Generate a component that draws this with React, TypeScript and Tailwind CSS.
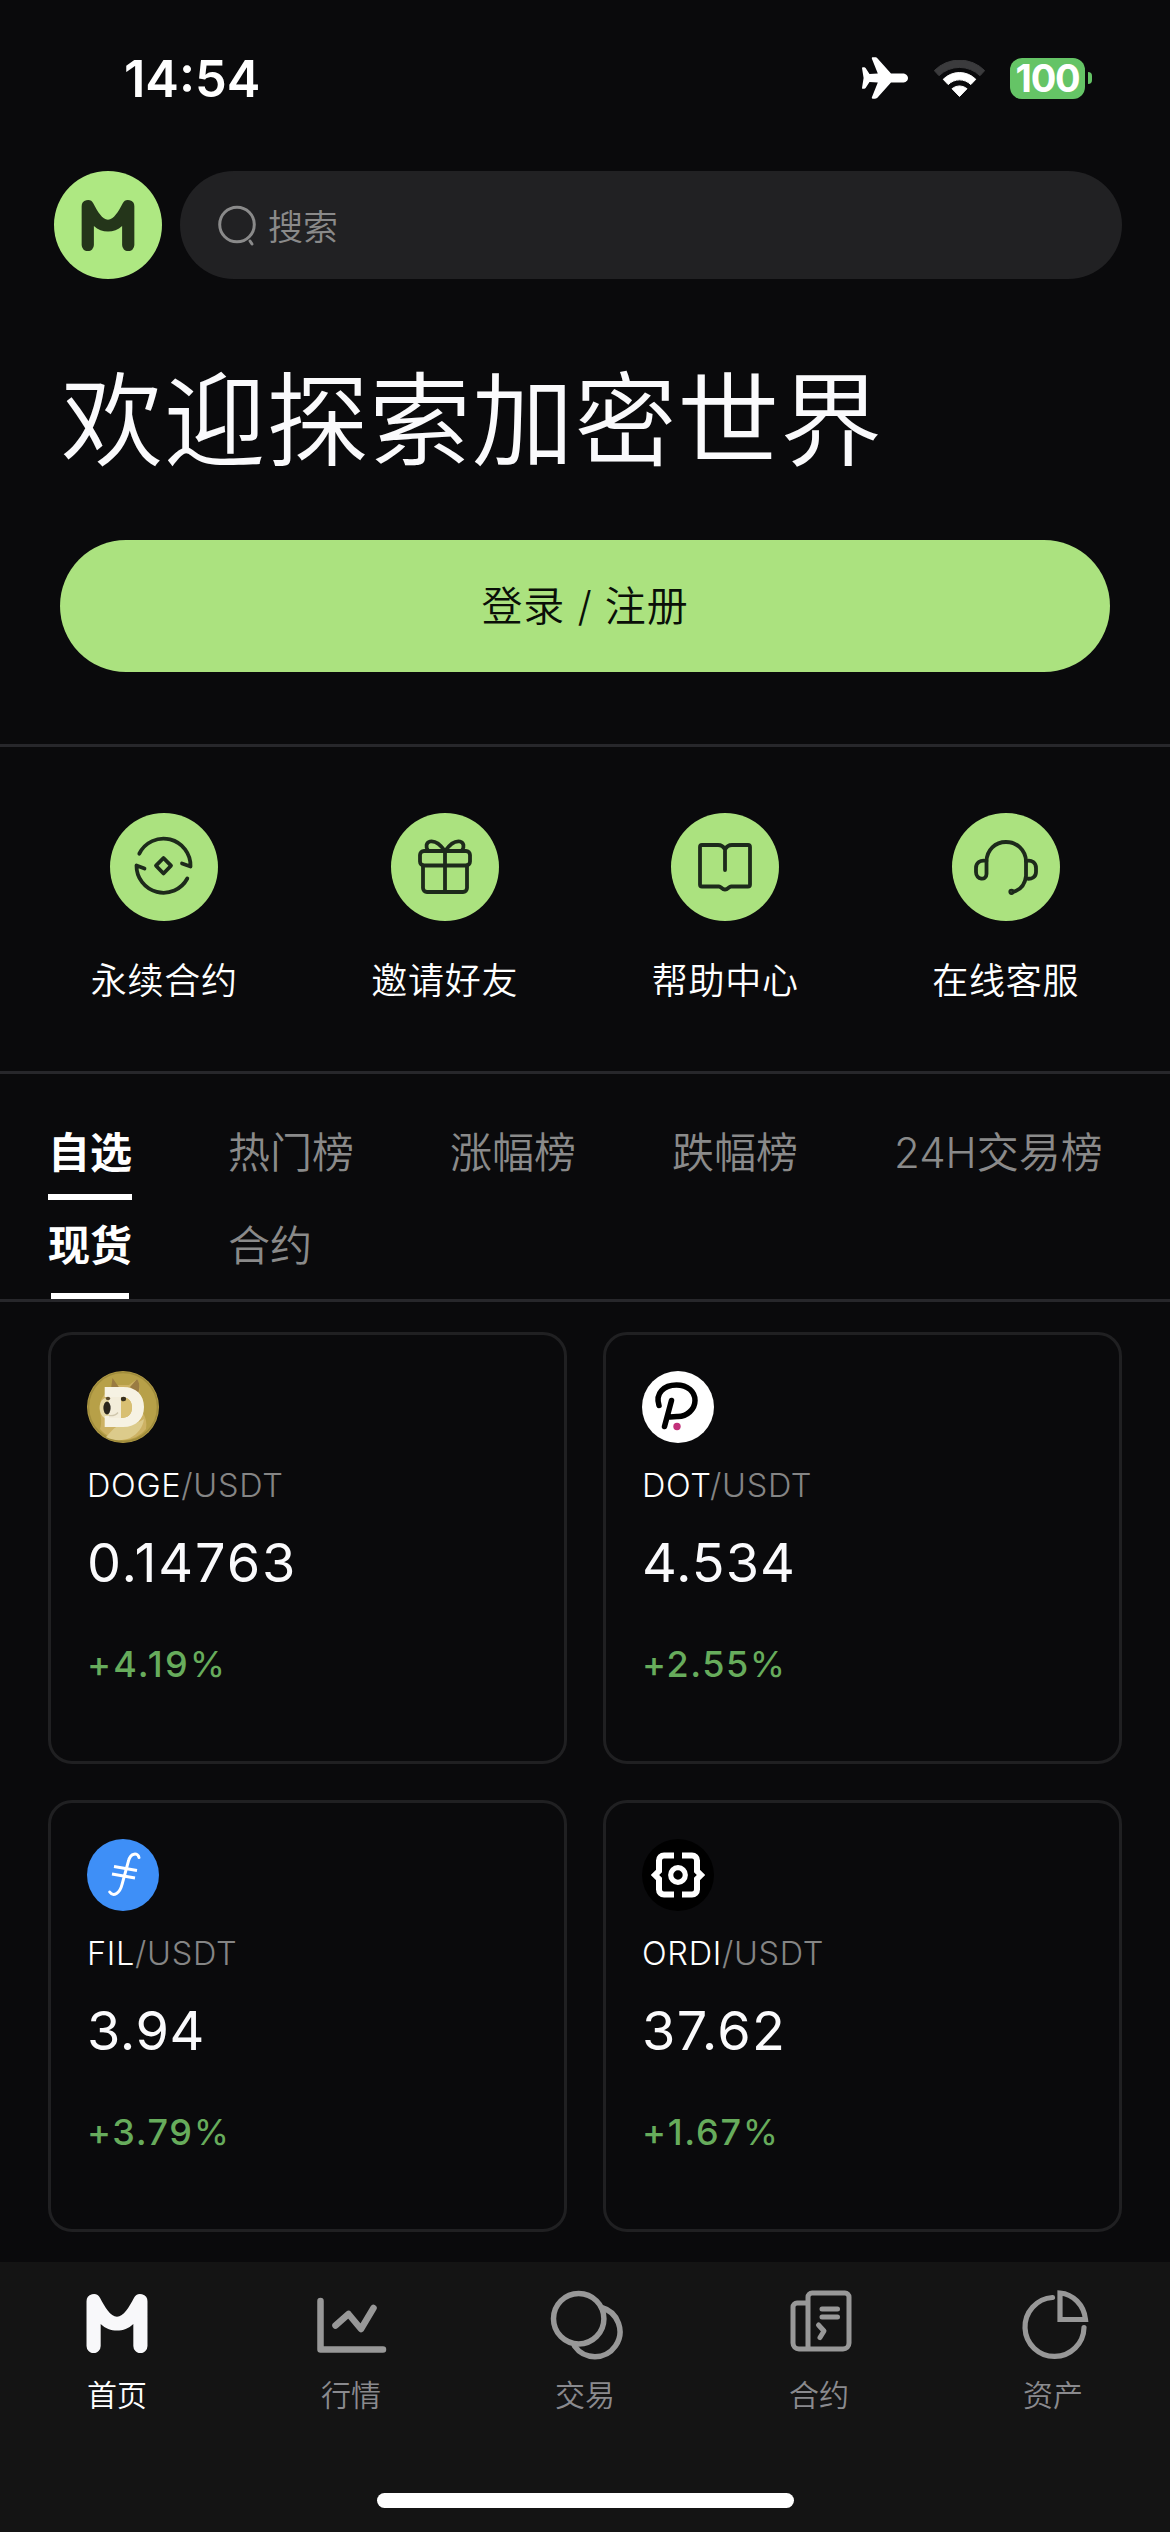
import React from "react";

function MLogo({ className, color }: { className?: string; color: string }) {
  return (
    <svg className={className} viewBox="0 0 62 60" fill={color}>
      <path d="M0 7.500a7.300 7.300 0 0 1 13.800-3.400c5 9.500 10.500 19 17.200 19s12.200-9.500 17.200-19A7.300 7.300 0 0 1 62 7.500V53a7.200 7.200 0 0 1-14.400 0V30.500C43 35 37 37.200 31 37.200S19 35 14.400 30.500V53A7.200 7.200 0 0 1 0 53Z" />
    </svg>
  );
}

function StatusBar() {
  return (
    <header className="flex h-[171px] items-start justify-between pl-[124px] pr-[78px] pt-[57px]">
      <span className="text-[50.5px] font-semibold leading-[44px]">14:54</span>
      <div className="flex items-center">
        <svg className="h-[42px] w-[46px]" viewBox="0 0 46 42" fill="#fff">
          <path d="M46 21c0-2.800-2.500-4.600-5.500-4.600H29L15.800 1.700C14.800.6 14.300.3 13 .3h-2.200c-.9 0-1.200.6-.9 1.400l5.900 14.700-8.300.5L3.600 11c-.4-.6-.8-.8-1.400-.8H.9c-.6 0-.9.3-.9.9L1.600 21 0 30.900c0 .6.300.9.9.9h1.300c.6 0 1-.2 1.400-.8l3.900-5.900 8.300.5-5.900 14.700c-.3.800 0 1.400.9 1.400H13c1.300 0 1.800-.3 2.800-1.400L29 25.600h11.500c3 0 5.500-1.800 5.500-4.600Z" />
        </svg>
        <svg className="ml-[26px] h-[37px] w-[51px]" viewBox="0 0 51 37">
          <path d="M.3 10.600A35.500 35.500 0 0 1 50.700 10.600L46 15.700A29.500 29.500 0 0 0 5 15.700Z" fill="#3b3b3d" stroke="#3b3b3d" strokeLinejoin="round" />
          <path d="M9.200 19.300a23 23 0 0 1 32.600 0l-5 5.300a15.800 15.800 0 0 0-22.600 0Z" fill="#fff" stroke="#fff" strokeLinejoin="round" />
          <path d="M18 28.700a11.500 11.500 0 0 1 15 0L25.500 36.500Z" fill="#fff" stroke="#fff" strokeLinejoin="round" />
        </svg>
        <div className="ml-[25px] flex h-[41px] w-[75px] items-center justify-center rounded-[12px] bg-[#65c466] text-[38px] font-bold leading-none tracking-[-1.2px]">
          100
        </div>
        <div className="ml-[3px] h-[12px] w-[4px] rounded-r-full bg-[#65c466]" />
      </div>
    </header>
  );
}

function ContractIcon() {
  return (
    <svg viewBox="0 0 60 60" className="size-[60px] overflow-visible" fill="none" stroke="#1d2a1b" strokeWidth="3.800" strokeLinecap="round" strokeLinejoin="round">
      <path d="M5.300 16.700A27 27 0 0 1 56.500 29.500l-8.500-3M53.300 41.500A27 27 0 0 1 2.500 28.500l8 3" />
      <path d="M29.500 21 37 28.700 29.500 36.500 22 28.700Z" />
    </svg>
  );
}
function GiftIcon() {
  return (
    <svg viewBox="0 0 60 60" className="size-[60px]" fill="none" stroke="#1d2a1b" strokeWidth="3.800" strokeLinejoin="round" strokeLinecap="round">
      <rect x="5" y="14" width="50" height="14.500" rx="4" />
      <path d="M8 28.500V51a4 4 0 0 0 4 4h36a4 4 0 0 0 4-4V28.500M30 14v41M30 14C25 7 20 3.500 15 4.500c-4 1-4.500 5.500-2 9M30 14C35 7 40 3.500 45 4.500c4 1 4.500 5.500 2 9" />
    </svg>
  );
}
function BookIcon() {
  return (
    <svg viewBox="0 0 60 60" className="size-[60px]" fill="none" stroke="#1d2a1b" strokeWidth="3.800" strokeLinejoin="round" strokeLinecap="round">
      <path d="M30 33V12.500c-1.500-3-4-4.500-7-4.500H7A2 2 0 0 0 5 10v37.500a2 2 0 0 0 2 2h17c2 0 3 3 6 3s4-3 6-3h17a2 2 0 0 0 2-2V10a2 2 0 0 0-2-2H37c-3 0-5.500 1.500-7 4.500" />
    </svg>
  );
}
function HeadsetIcon() {
  return (
    <svg viewBox="0 0 66 60" className="h-[60px] w-[66px]" fill="none" stroke="#1d2a1b" strokeWidth="3.800" strokeLinecap="round" strokeLinejoin="round">
      <path d="M13.500 24C14 13 22 5 33 5s19.500 8 20 19v15C52 48 47 53 40 55" />
      <path d="M13.500 24v13c0 7-10.500 6-10.500-2v-4c0-5 4-8.500 10.500-7ZM53 24c6-1.500 10 2 10 7v4c0 5-4 7.500-10 6.500" />
      <circle cx="38.500" cy="54.800" r="1.200" />
    </svg>
  );
}

const shortcuts = [
  { label: "永续合约", icon: <ContractIcon /> },
  { label: "邀请好友", icon: <GiftIcon /> },
  { label: "帮助中心", icon: <BookIcon /> },
  { label: "在线客服", icon: <HeadsetIcon /> },
];

function DogeIcon() {
  return (
    <svg viewBox="0 0 72 72" className="size-[72px]">
      <circle cx="36" cy="36" r="36" fill="#b7a048" />
      <circle cx="36" cy="36" r="34.500" fill="none" stroke="#a08c3c" strokeWidth="1.500" />
      <path d="M13 58c2-6 1-12 0-17-1-8 1-14 5-18l6-5 3-4h15l8-6c3 4 3 10 2 14l4 20c3 5 4 10 3 16-6 7-14 11-23 11s-17-4-23-11Z" fill="#cdb264" />
      <path d="M24 18 25.500 7l7 10ZM43 16l7-8c3 4 3 9 1 15Z" fill="#9a7b42" />
      <path d="M19 66c4-4 8-10 14-12 8 1 17-1 24-6-1 8-6 15-14 19-8 3-16 3-24-1Z" fill="#dccb8b" />
      <path d="M18 27c-5 2-6 8-5 13 1 4 3 7 7 8h10V27Z" fill="#e6d9a8" />
      <path fillRule="evenodd" d="M17.700 16H36c13.500 0 21 8 21 20s-7.500 20-21 20H17.700V45H22V26h-4.300ZM34 26v21c7 0 11-4 11-10.500S41 26 34 26Z" fill="#f6f2e3" />
      <path d="M22 26h12v21H22Z" fill="#f3edda" />
      <path d="M34 26v21c7 0 11-4 11-10.500S41 26 34 26Z" fill="#d8bf72" />
      <ellipse cx="20" cy="37" rx="3.600" ry="6.500" fill="#29251d" />
      <ellipse cx="36.500" cy="28" rx="2.600" ry="2.300" fill="#38301f" />
      <ellipse cx="21" cy="27.500" rx="2.200" ry="1.800" fill="#5c4c30" />
      <path d="M22 44.500c4 .5 7-.5 9-3" fill="none" stroke="#cfc6ac" strokeWidth="1.300" />
    </svg>
  );
}
function DotIcon() {
  return (
    <svg viewBox="0 0 72 72" className="size-[72px]">
      <circle cx="36" cy="36" r="36" fill="#fff" />
      <path d="M17 34.500C13 22 22 14 34.500 14 46 14 53 21 53 29.500S45 46 35 45.500l-7 .5M29.500 29.500 22.500 55.500" fill="none" stroke="#000" strokeWidth="5.500" strokeLinecap="round" />
      <circle cx="35" cy="55.500" r="3.700" fill="#c2307a" />
    </svg>
  );
}
function FilIcon() {
  return (
    <svg viewBox="0 0 72 72" className="size-[72px]">
      <circle cx="36" cy="36" r="36" fill="#3e8ff7" />
      <path d="M52 18.500c-1-5-8.500-5-10.500 3.500L35 45.500C33 54 26.500 58.500 22.700 53" fill="none" stroke="#fff" strokeWidth="3" strokeLinecap="round" />
      <path d="M27 27.500 50 31.500M25 35 48 39" stroke="#fff" strokeWidth="3" />
    </svg>
  );
}
function OrdiIcon() {
  return (
    <svg viewBox="0 0 72 72" className="size-[72px]">
      <circle cx="36" cy="36" r="36" fill="#000" />
      <path d="M32 16.500H22a5 5 0 0 0-5 5V32l-4 4 4 4v10.500a5 5 0 0 0 5 5h10M40 16.500h10a5 5 0 0 1 5 5V32l4 4-4 4v10.500a5 5 0 0 1-5 5H40" fill="none" stroke="#fff" strokeWidth="6" />
      <circle cx="36" cy="36" r="7.300" fill="none" stroke="#fff" strokeWidth="5.200" />
    </svg>
  );
}

const coins = [
  { base: "DOGE", price: "0.14763", change: "+4.19", icon: <DogeIcon />, priceTracking: "tracking-[1.9px]", changeTracking: "tracking-[2.2px]" },
  { base: "DOT", price: "4.534", change: "+2.55", icon: <DotIcon />, priceTracking: "tracking-[1px]", changeTracking: "tracking-[1.5px]" },
  { base: "FIL", price: "3.94", change: "+3.79", icon: <FilIcon />, priceTracking: "tracking-[0.6px]", changeTracking: "tracking-[1.6px]" },
  { base: "ORDI", price: "37.62", change: "+1.67", icon: <OrdiIcon />, priceTracking: "tracking-[1.3px]", changeTracking: "tracking-[1.7px]" },
];

const navIcon = "h-[78px] w-[78px]";
const navItems = [
  { label: "首页", icon: <div className="flex size-[78px] items-center justify-center"><MLogo className="h-[59px] w-[62px]" color="#f8f8fa" /></div> },
  {
    label: "行情",
    icon: (
      <svg viewBox="0 0 78 78" className={navIcon} fill="none" stroke="#989898" strokeWidth="6.500" strokeLinecap="round" strokeLinejoin="round">
        <path d="M8.500 17v48.500H71" /><path d="M23.500 41.500 36.500 30 49 45 61.500 24" />
      </svg>
    ),
  },
  {
    label: "交易",
    icon: (
      <svg viewBox="0 0 78 78" className={navIcon} fill="none" stroke="#989898" strokeWidth="5.500" strokeLinecap="round">
        <circle cx="32.700" cy="34.700" r="25.200" /><path d="M55.500 23.500a25 25 0 1 1-27 38.500" />
      </svg>
    ),
  },
  {
    label: "合约",
    icon: (
      <svg viewBox="0 0 78 78" className={navIcon} fill="none" stroke="#989898" strokeWidth="5" strokeLinejoin="round" strokeLinecap="round">
        <path d="M28 19H17a4 4 0 0 0-4 4V59a6 6 0 0 0 6 6h44a6 6 0 0 0 6-6V13a4 4 0 0 0-4-4H32a4 4 0 0 0-4 4V65" />
        <path d="M42 25H57.500M42 33H57.500M38.500 41 44 47 40 53.500" />
      </svg>
    ),
  },
  {
    label: "资产",
    icon: (
      <svg viewBox="0 0 78 78" className={navIcon} fill="none" stroke="#989898" strokeWidth="5.200" strokeLinecap="round">
        <path d="M38.500 13.500A29.500 29.500 0 1 0 70 43.500" /><path d="M46 9c13 1 24 12 25.500 26.500H46Z" strokeLinejoin="miter" />
      </svg>
    ),
  },
];

export default function App() {
  return (
    <div className="flex h-[2532px] w-[1170px] flex-col overflow-hidden bg-[#0a0a0c] font-['Inter','Noto_Sans_CJK_SC',sans-serif] text-white">
      <StatusBar />
      <div className="flex gap-[18px] pl-[54px] pr-[48px]">
        <div className="flex size-[108px] items-center justify-center rounded-full bg-[#aee882]">
          <MLogo className="h-[51px] w-[54px]" color="#24351a" />
        </div>
        <div className="flex h-[108px] flex-1 items-center rounded-full bg-[#212123] pl-[38px] text-[#8a8a8a]">
          <svg className="mt-[2px] h-[42px] w-[42px]" viewBox="0 0 42 42" fill="none" stroke="#8a8a8a" strokeWidth="3" strokeLinecap="round">
            <circle cx="19" cy="19.500" r="17.300" /><path d="m32 36 2 3" />
          </svg>
          <span className="ml-[8px] mt-[3px] text-[35px] font-[350] leading-[48px]">搜索</span>
        </div>
      </div>
      <h1 className="mt-[73px] h-[137px] pl-[61px] text-[102px] font-[350] leading-[138px] tracking-[0.7px] text-[#fafafc]">欢迎探索加密世界</h1>
      <button className="mx-[60px] mt-[51px] h-[132px] shrink-0 rounded-full bg-[#abe27f] text-[41px] font-[350] leading-[60px] tracking-[0.8px] text-[#0a0f08]">登录 / 注册</button>
      <section className="mt-[72px] grid h-[330px] shrink-0 grid-cols-4 border-y-[3px] border-[#27272b] px-6 pt-[66px]">
        {shortcuts.map((s) => (
          <div key={s.label} className="flex flex-col items-center">
            <div className="flex size-[108px] items-center justify-center rounded-full bg-[#abe27f]">{s.icon}</div>
            <span className="mt-[33px] text-[36px] font-[350] leading-[54px] tracking-[0.8px]">{s.label}</span>
          </div>
        ))}
      </section>
      <nav className="flex h-[126px] shrink-0 gap-24 whitespace-nowrap pl-12 text-[42px] leading-[60px] text-[#8a8a8a]">
        <span className="flex flex-col justify-between pt-[49px] font-bold text-white">自选<i className="h-[6px] shrink-0 bg-white" /></span>
        {["热门榜", "涨幅榜", "跌幅榜", "24H交易榜"].map((t) => (
          <span key={t} className="pt-[49px] font-[350]">{t}</span>
        ))}
      </nav>
      <nav className="flex h-[102px] shrink-0 gap-24 border-b-[3px] border-[#27272b] pl-12 text-[42px] leading-[60px] text-[#8a8a8a]">
        <span className="flex flex-col justify-between pt-[16px] font-bold text-white">现货<i className="mx-[3px] h-[6px] shrink-0 bg-white" /></span>
        <span className="pt-[16px] font-[350]">合约</span>
      </nav>
      <main className="grid shrink-0 grid-cols-2 gap-9 px-12 pb-[30px] pt-[30px]">
        {coins.map((c) => (
          <article key={c.base} className="flex h-[432px] flex-col rounded-[24px] border-[3px] border-[#202022] px-[36px] pt-[36px]">
            {c.icon}
            <div className="mt-[22px] text-[32.5px] font-[350] leading-[42px] tracking-[0.7px]">{c.base}<span className="text-[#858585]">/USDT</span></div>
            <div className="mt-[20px] text-[54px] font-[380] leading-[72px] text-[#fafafc]"><span className={c.priceTracking}>{c.price}</span></div>
            <div className="mt-[41px] text-[36px] font-medium leading-[48px] text-[#67ac5c]">
              <span className={c.changeTracking}>{c.change}<span className="font-normal">%</span></span>
            </div>
          </article>
        ))}
      </main>
      <footer className="flex h-[270px] shrink-0 flex-col items-center bg-[#141414] pt-[22px]">
        <div className="grid w-full grid-cols-5">
          {navItems.map((n, i) => (
            <div key={n.label} className="flex flex-col items-center">
              {n.icon}
              <span className={i === 0 ? "mt-[11px] text-[30px] font-[350] leading-[45px]" : "mt-[11px] text-[30px] font-[350] leading-[45px] text-[#8a8a8e]"}>{n.label}</span>
            </div>
          ))}
        </div>
        <div className="mt-[75px] h-[15px] w-[417px] shrink-0 rounded-full bg-white" />
      </footer>
    </div>
  );
}
